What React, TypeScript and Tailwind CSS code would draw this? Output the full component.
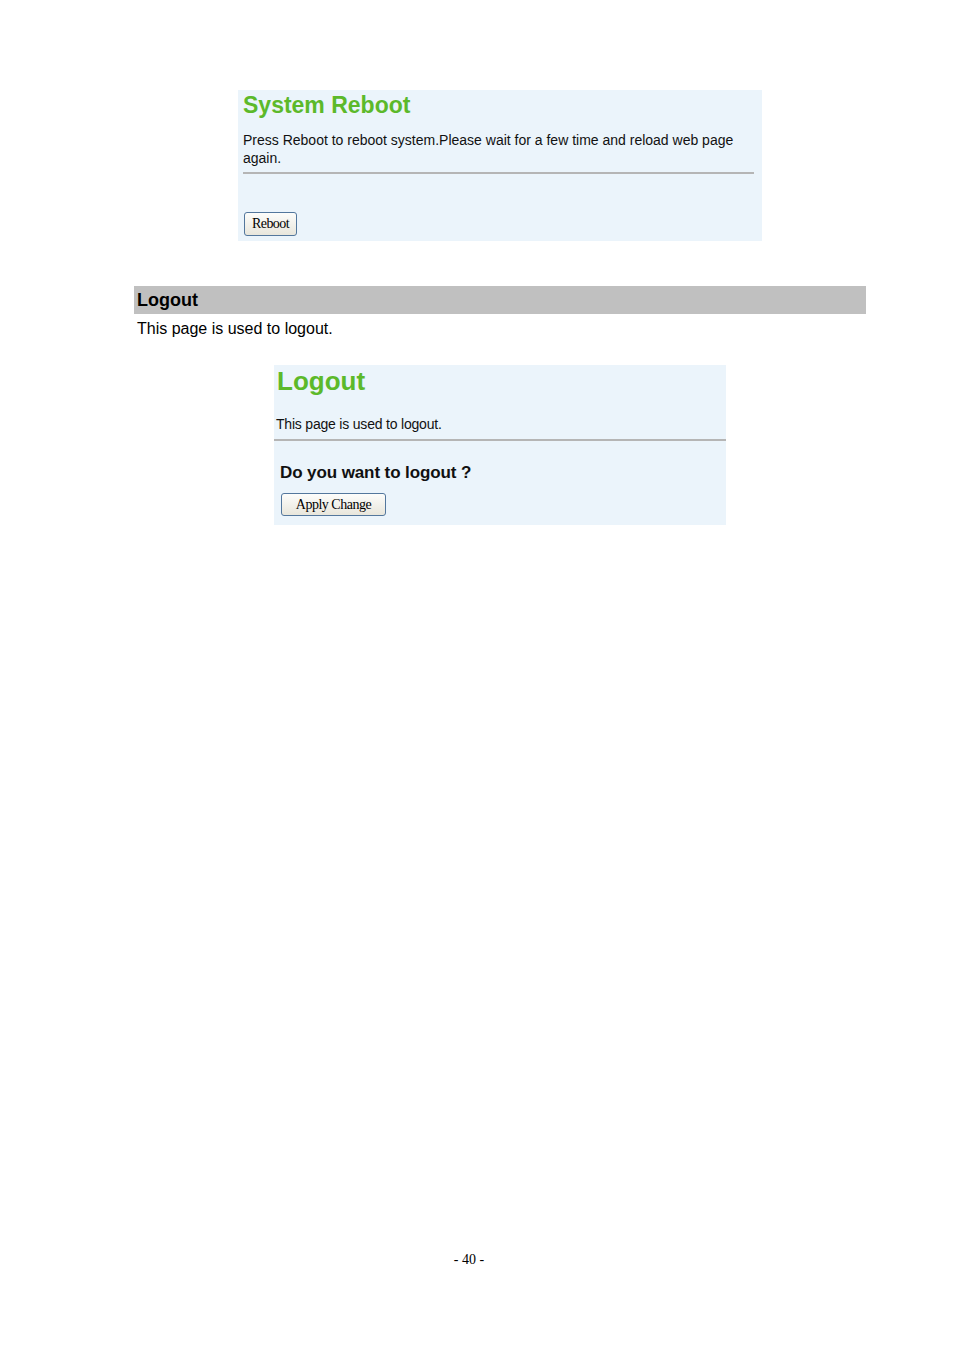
export default function App() {
  return (
    <div className="min-h-[1350px] w-[954px] bg-white font-['Liberation_Sans',Arial,sans-serif] text-black">
      <div className="pt-[90px]">
        {/* System Reboot panel */}
        <div className="ml-[238px] flex h-[151px] w-[524px] flex-col bg-[#ebf4fb] px-[5px]">
          <h2 className="mt-[1px] text-[23px] font-bold leading-[28px] text-[#5cb92a]">System Reboot</h2>
          <p className="mt-[12px] w-[510px] text-[14px] leading-[18px] text-[#111]">
            Press Reboot to reboot system.Please wait for a few time and reload web page again.
          </p>
          <div className="mt-[5px] mr-[3px] h-[2px] bg-[#b5b5b5]" />
          <div className="mt-[37px] ml-[1px]">
            <button className="h-[24px] w-[53px] rounded-[3px] border border-[#53779d] bg-gradient-to-b from-[#fdfdfb] to-[#e8e6dc] font-['Liberation_Serif','Times_New_Roman',serif] text-[14px] leading-[20px] tracking-[-0.6px] text-black">
              Reboot
            </button>
          </div>
        </div>

        {/* Logout section heading */}
        <div className="mt-[45px] ml-[134px] flex h-[28px] w-[732px] items-center bg-[#c0c0c0] px-[3px]">
          <span className="text-[18px] font-bold leading-[22px]">Logout</span>
        </div>
        <p className="ml-[137px] mt-[5px] text-[16px] leading-[20px]">This page is used to logout.</p>

        {/* Logout panel */}
        <div className="mt-[26px] ml-[274px] flex h-[160px] w-[452px] flex-col bg-[#ebf4fb]">
          <h2 className="ml-[3px] mt-[1px] text-[26px] font-bold leading-[30px] text-[#5cb92a]">Logout</h2>
          <p className="ml-[2px] mt-[19px] text-[14px] leading-[18px] tracking-[-0.2px] text-[#111]">
            This page is used to logout.
          </p>
          <div className="mt-[6px] h-[2px] bg-[#b5b5b5]" />
          <h3 className="ml-[6px] mt-[21px] text-[17px] font-bold leading-[22px] tracking-[-0.1px] text-[#111]">Do you want to logout ?</h3>
          <div className="ml-[7px] mt-[8px]">
            <button className="h-[23px] w-[105px] rounded-[3px] border border-[#53779d] bg-gradient-to-b from-[#fdfdfb] to-[#e8e6dc] font-['Liberation_Serif','Times_New_Roman',serif] text-[14px] leading-[19px] tracking-[-0.5px] text-black">
              Apply Change
            </button>
          </div>
        </div>
      </div>

      <p className="mt-[726px] text-center font-['Liberation_Serif','Times_New_Roman',serif] text-[14px] leading-[18px] pr-[16px]">- 40 -</p>
    </div>
  );
}
